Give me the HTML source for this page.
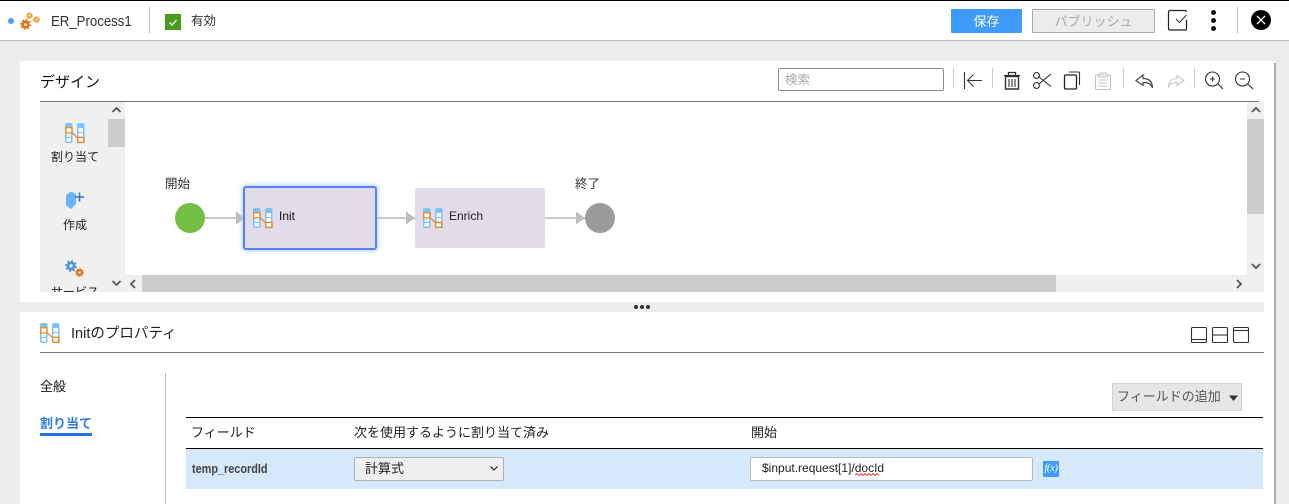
<!DOCTYPE html>
<html lang="ja"><head><meta charset="utf-8"><title>ER_Process1</title>
<style>
*{box-sizing:border-box}
html,body{margin:0;padding:0;width:1289px;height:504px;overflow:hidden;background:#ececec;font-family:"Liberation Sans","Noto Sans CJK JP",sans-serif;color:#222}
.a{position:absolute}
.t{position:absolute;white-space:nowrap;line-height:1}
svg{position:absolute;display:block;overflow:visible}
</style></head><body>
<svg width="0" height="0" style="position:absolute"><defs>
<symbol id="n" viewBox="0 0 20 20" overflow="visible">
<rect x="0" y="0" width="7.500" height="20" rx="2" fill="#7cc2f9"/><rect x="12" y="0" width="7.500" height="20" rx="2" fill="#7cc2f9"/>
<rect x="1.500" y="10.500" width="4.500" height="3.500" fill="#e8f4fe"/><rect x="1.500" y="15" width="4.500" height="3.500" fill="#fff"/>
<rect x="13.500" y="5" width="4.500" height="4" fill="#fff"/><rect x="13.500" y="10" width="4.500" height="3.500" fill="#fff"/>
<rect x="1.300" y="5" width="4.800" height="4.500" fill="#fff"/><rect x="13" y="15" width="5" height="3.500" fill="#fff"/>
<path d="M.7 4.700h6.400v5.200H.7zM12.700 14.500h6.400v5h-6.400zM7.100 9.900l5.600 4.800" fill="none" stroke="#f08a1d" stroke-width="1.300"/>
</symbol>
<symbol id="g" viewBox="0 0 12 12" overflow="visible">
<circle cx="6" cy="6" r="3.100" fill="none" stroke="currentColor" stroke-width="2.800"/>
<circle cx="6" cy="6" r="5.100" fill="none" stroke="currentColor" stroke-width="1.600" stroke-dasharray="1.900 2.100"/>
</symbol>
</defs></svg>

<!-- header -->
<div class="a" style="left:0;top:0;width:1289px;height:41px;background:#fff;border-top:1px solid #000;border-bottom:1px solid #bbb"></div>
<div class="a" style="left:8px;top:18px;width:6px;height:6px;border-radius:50%;background:#4a9ff5"></div>
<svg style="left:20px;top:12px" width="20" height="20" viewBox="0 0 20 20">
<path d="M5 12L9 4M6 12L16 7" stroke="#bbb" stroke-width=".7"/>
<use href="#g" x="0" y="7" width="11" height="11" style="color:#ee6c0c"/>
<use href="#g" x="6" y="0" width="7" height="7" style="color:#f59a23"/>
<use href="#g" x="13" y="4" width="7" height="7" style="color:#f59a23"/>
</svg>
<div class="t" style="left:51px;top:14px;font-size:15px;color:#333;transform:scaleX(.88);transform-origin:0 0">ER_Process1</div>
<div class="a" style="left:149px;top:7px;width:1px;height:26px;background:#bbb"></div>
<div class="a" style="left:165px;top:14px;width:16px;height:16px;background:#4b9c1a"></div>
<svg style="left:165px;top:14px" width="16" height="16"><path d="M4.500 8.500l2.500 2.500 4.500-5" fill="none" stroke="#fff" stroke-width="1.300"/></svg>
<div class="t" style="left:191px;top:15px;font-size:12.500px;color:#333">有効</div>
<div class="a" style="left:951px;top:9px;width:71px;height:24px;background:#3d9bfb;border-radius:1px"></div>
<div class="t" style="left:951px;top:15px;width:71px;text-align:center;font-size:13px;color:#fff">保存</div>
<div class="a" style="left:1032px;top:9px;width:123px;height:24px;background:#ececec;border:1px solid #a8a8a8;border-radius:1px"></div>
<div class="t" style="left:1032px;top:15px;width:123px;text-align:center;font-size:13px;color:#aaa">パブリッシュ</div>
<svg style="left:1168px;top:10px" width="22" height="22"><path d="M18.500 1.800a1.300 1.300 0 0 0-1.300-1.300H2A1.500 1.500 0 0 0 .5 2v16.500A1.500 1.500 0 0 0 2 20h15.200a1.300 1.300 0 0 0 1.300-1.300V10" fill="none" stroke="#222" stroke-width="1.200"/><path d="M8 9l3.500 3.500L18.500 5" fill="none" stroke="#333" stroke-width="1"/></svg>
<div class="a" style="left:1211px;top:10px;width:5px;height:5px;border-radius:50%;background:#111"></div>
<div class="a" style="left:1211px;top:18px;width:5px;height:5px;border-radius:50%;background:#111"></div>
<div class="a" style="left:1211px;top:26px;width:5px;height:5px;border-radius:50%;background:#111"></div>
<div class="a" style="left:1237px;top:7px;width:1px;height:26px;background:#bbb"></div>
<div class="a" style="left:1251px;top:10px;width:20px;height:20px;border-radius:50%;background:#000"></div>
<svg style="left:1251px;top:10px" width="20" height="20"><path d="M6 6l8 8M14 6l-8 8" stroke="#fff" stroke-width="1.300"/></svg>

<!-- design panel -->
<div class="a" style="left:20px;top:61px;width:1254px;height:241px;background:#fff"></div>
<div class="t" style="left:40px;top:75px;font-size:15px;color:#111">デザイン</div>
<div class="a" style="left:778px;top:68px;width:166px;height:23px;border:1px solid #8a8a96;border-radius:2px;background:#fff"></div>
<div class="t" style="left:785px;top:74px;font-size:12.500px;color:#aaa">検索</div>
<div class="a" style="left:953px;top:68px;width:1px;height:20px;background:#ccc"></div>
<div class="a" style="left:992px;top:68px;width:1px;height:20px;background:#ccc"></div>
<div class="a" style="left:1123px;top:68px;width:1px;height:20px;background:#ccc"></div>
<div class="a" style="left:1194px;top:68px;width:1px;height:20px;background:#ccc"></div>
<svg style="left:960px;top:68px" width="290" height="26" viewBox="960 68 290 26" fill="none" stroke="#333" stroke-width="1.100">
<path d="M964.500 72v17M982 80.500h-14.500M973.500 74.500l-6 6 6 6"/>
<path d="M1004 75.500h16M1008.500 75v-2.500h7V75" stroke-width="1.300"/><path d="M1005.500 76.500h13V89h-13z" stroke-width="1.400"/><path d="M1009 79v8M1012 79v8M1015 79v8"/>
<circle cx="1036.500" cy="75.500" r="2.900"/><circle cx="1036.500" cy="85.500" r="2.900"/><path d="M1039 77l12 9.500M1039 84l12-10"/>
<path d="M1069 72h9.500a1 1 0 0 1 1 1v12"/><rect x="1064.500" y="75" width="12" height="14" rx="1" stroke="#222" stroke-width="1.300"/>
<g stroke="#c4c4c4"><rect x="1095.500" y="75" width="15" height="14.500" rx="1"/><path d="M1099.500 75v-2h7v2h1.500v2h-10v-2zM1098.500 80h9M1098.500 83h9M1098.500 86h9"/></g>
<path d="M1143 75l-7 5.500 7 5v-3c5 0 8 1 9.500 5.500 0-6.500-3.500-9.500-9.500-9.500z" stroke="#444" stroke-width="1.200"/>
<path d="M1175 75.500l7 5-7 5v-3c-5 0-7.500 1-8.500 5 0-6 2.500-9 8.500-9z" stroke="#c8c8c8" transform="translate(2 0)"/>
<circle cx="1212.500" cy="79" r="7"/><path d="M1218 84l5 5M1210 79h5M1212.500 76.500v5"/>
<circle cx="1242.500" cy="79" r="7"/><path d="M1248 84l5 5M1240 79h5"/>
</svg>
<div class="a" style="left:40px;top:101px;width:1219px;height:1px;background:#777"></div>

<!-- palette -->
<div class="a" style="left:40px;top:102px;width:68px;height:190px;background:#f0f0f0;overflow:hidden">
<div class="t" style="left:0;top:49px;width:70px;text-align:center;font-size:12px;color:#222">割り当て</div>
<div class="t" style="left:0;top:117px;width:70px;text-align:center;font-size:12px;color:#222">作成</div>
<div class="t" style="left:0;top:184px;width:70px;text-align:center;font-size:12px;color:#222">サービス</div>
</div>
<svg style="left:65px;top:123px" width="20" height="20"><use href="#n" width="20" height="20"/></svg>
<svg style="left:65px;top:191px" width="20" height="22"><path d="M6 .500l5 2.500v10l-5 5-5-3.500V4z" fill="#69b3f7"/><path d="M10 6h9M14.500 1.500v9" stroke="#2b74d6" stroke-width="1.600"/></svg>
<svg style="left:65px;top:260px" width="20" height="18"><use href="#g" x="0" y="0" width="12" height="12" style="color:#4a90e2"/><use href="#g" x="10" y="8" width="9" height="9" style="color:#ee6c0c"/></svg>

<div class="a" style="left:108px;top:102px;width:17px;height:190px;background:#f0f0f0"></div>
<div class="a" style="left:108px;top:119px;width:17px;height:28px;background:#cdcdcd"></div>
<div class="a" style="left:125px;top:275px;width:1139px;height:17px;background:#f0f0f0"></div>
<div class="a" style="left:142px;top:275px;width:914px;height:17px;background:#cdcdcd"></div>
<div class="a" style="left:1247px;top:102px;width:17px;height:173px;background:#f0f0f0"></div>
<div class="a" style="left:1247px;top:119px;width:17px;height:95px;background:#cdcdcd"></div>
<svg style="left:0;top:0" width="1289" height="504" fill="none" stroke="#555" stroke-width="1.800">
<path d="M112.500 112l4-4 4 4M112.500 281l4 4 4-4M135 280l-4 4 4 4M1252 112l4-4 4 4M1252 264l4 4 4-4M1237 280l4 4-4 4"/>
</svg>

<!-- flow -->
<div class="t" style="left:165px;top:178px;font-size:12.500px;color:#333">開始</div>
<div class="a" style="left:175px;top:203px;width:30px;height:30px;border-radius:50%;background:#72bf44"></div>
<div class="a" style="left:205px;top:217px;width:40px;height:2px;background:#c8c8c8"></div>
<svg style="left:236px;top:211px" width="9" height="14"><path d="M0 .500L9 7 0 13.500z" fill="#bdbdbd"/></svg>
<div class="a" style="left:243px;top:186px;width:134px;height:64px;background:#e2dcea;border:2px solid #5b80f5;border-radius:3px;box-shadow:0 0 4px 1px #a9d4fb"></div>
<svg style="left:253px;top:208px" width="20" height="20"><use href="#n" width="20" height="20"/></svg>
<div class="t" style="left:279px;top:210px;font-size:12px;color:#111">Init</div>
<div class="a" style="left:377px;top:217px;width:38px;height:2px;background:#c8c8c8"></div>
<svg style="left:406px;top:211px" width="9" height="14"><path d="M0 .500L9 7 0 13.500z" fill="#bdbdbd"/></svg>
<div class="a" style="left:415px;top:188px;width:130px;height:60px;background:#e2dcea;border-radius:2px"></div>
<svg style="left:423px;top:208px" width="20" height="20"><use href="#n" width="20" height="20"/></svg>
<div class="t" style="left:449px;top:210px;font-size:12px;color:#222">Enrich</div>
<div class="a" style="left:545px;top:217px;width:40px;height:2px;background:#c8c8c8"></div>
<svg style="left:576px;top:211px" width="9" height="14"><path d="M0 .500L9 7 0 13.500z" fill="#bdbdbd"/></svg>
<div class="t" style="left:575px;top:178px;font-size:12.500px;color:#333">終了</div>
<div class="a" style="left:585px;top:203px;width:30px;height:30px;border-radius:50%;background:#9b9b9b"></div>

<!-- splitter -->
<div class="a" style="left:20px;top:302px;width:1244px;height:10px;background:#ececec"></div>
<div class="a" style="left:634px;top:305px;width:4px;height:4px;border-radius:50%;background:#333"></div>
<div class="a" style="left:640px;top:305px;width:4px;height:4px;border-radius:50%;background:#333"></div>
<div class="a" style="left:646px;top:305px;width:4px;height:4px;border-radius:50%;background:#333"></div>

<!-- properties panel -->
<div class="a" style="left:20px;top:312px;width:1254px;height:192px;background:#fff"></div>
<div class="a" style="left:1264px;top:302px;width:10px;height:10px;background:#fff"></div>
<div class="a" style="left:1274px;top:63px;width:2px;height:441px;background:#aaa"></div>
<svg style="left:40px;top:323px" width="20" height="20"><use href="#n" width="20" height="20"/></svg>
<div class="t" style="left:71px;top:327px;font-size:14.500px;color:#222">Initのプロパティ</div>
<svg style="left:1190px;top:327px" width="62" height="18" fill="none" stroke="#333" stroke-width="1.100">
<rect x="1.500" y=".500" width="15" height="15" rx="1"/><path d="M1.500 12.500h15"/>
<rect x="22.500" y=".500" width="15" height="15" rx="1"/><path d="M22.500 8h15"/>
<rect x="43.500" y=".500" width="15" height="15" rx="1"/><path d="M43.500 3.500h15"/>
</svg>
<div class="a" style="left:40px;top:352px;width:1224px;height:1px;background:#777"></div>
<div class="t" style="left:40px;top:380px;font-size:13px;color:#111">全般</div>
<div class="t" style="left:40px;top:417px;font-size:13px;font-weight:bold;color:#2f7be0">割り当て</div>
<div class="a" style="left:40px;top:433px;width:52px;height:3px;background:#1f74e0"></div>
<div class="a" style="left:165px;top:373px;width:1px;height:131px;background:#bbb"></div>

<div class="a" style="left:1112px;top:383px;width:130px;height:28px;background:#e6e6e6;border:1px solid #d2d2d2"></div>
<div class="t" style="left:1117px;top:390px;font-size:13px;color:#555">フィールドの追加</div>
<svg style="left:1229px;top:395px" width="10" height="7"><path d="M0 .500h9L4.500 6z" fill="#333"/></svg>

<div class="a" style="left:186px;top:417px;width:1077px;height:1px;background:#000"></div>
<div class="t" style="left:191px;top:426px;font-size:13px;color:#222">フィールド</div>
<div class="t" style="left:354px;top:426px;font-size:13px;color:#222">次を使用するように割り当て済み</div>
<div class="t" style="left:751px;top:426px;font-size:13px;color:#222">開始</div>
<div class="a" style="left:186px;top:448px;width:1077px;height:1px;background:#000"></div>
<div class="a" style="left:186px;top:449px;width:1077px;height:40px;background:#d5e9fa"></div>
<div class="t" style="left:192px;top:463px;font-size:12.500px;font-weight:bold;color:#444;transform:scaleX(.87);transform-origin:0 0">temp_recordId</div>
<div class="a" style="left:354px;top:457px;width:150px;height:24px;background:#efefef;border:1px solid #b0b0b0;border-radius:2px"></div>
<div class="t" style="left:365px;top:462px;font-size:13px;color:#222">計算式</div>
<svg style="left:489px;top:465px" width="10" height="7"><path d="M1.500 1.500l3.500 3.500 3.500-3.500" fill="none" stroke="#222" stroke-width="1.200"/></svg>
<div class="a" style="left:750px;top:457px;width:283px;height:24px;background:#fff;border:1px solid #bbb;border-radius:2px"></div>
<div class="t" style="left:762px;top:462px;font-size:12px;color:#222">$input.request[1]/docId</div>
<svg style="left:855px;top:473px" width="30" height="4"><path d="M0 2l2-1.500 2 2 2-2 2 2 2-2 2 2 2-2 2 2 2-2 2 2 2-2 2 2" fill="none" stroke="#e02020" stroke-width=".8"/></svg>
<div class="a" style="left:1043px;top:461px;width:16px;height:16px;background:#3d9bfb;border-radius:1px"></div>
<div class="t" style="left:1043px;top:464px;width:16px;text-align:center;font-family:'Liberation Serif',serif;font-style:italic;font-size:10.500px;letter-spacing:-.3px;color:#fff">f(x)</div>
</body></html>
